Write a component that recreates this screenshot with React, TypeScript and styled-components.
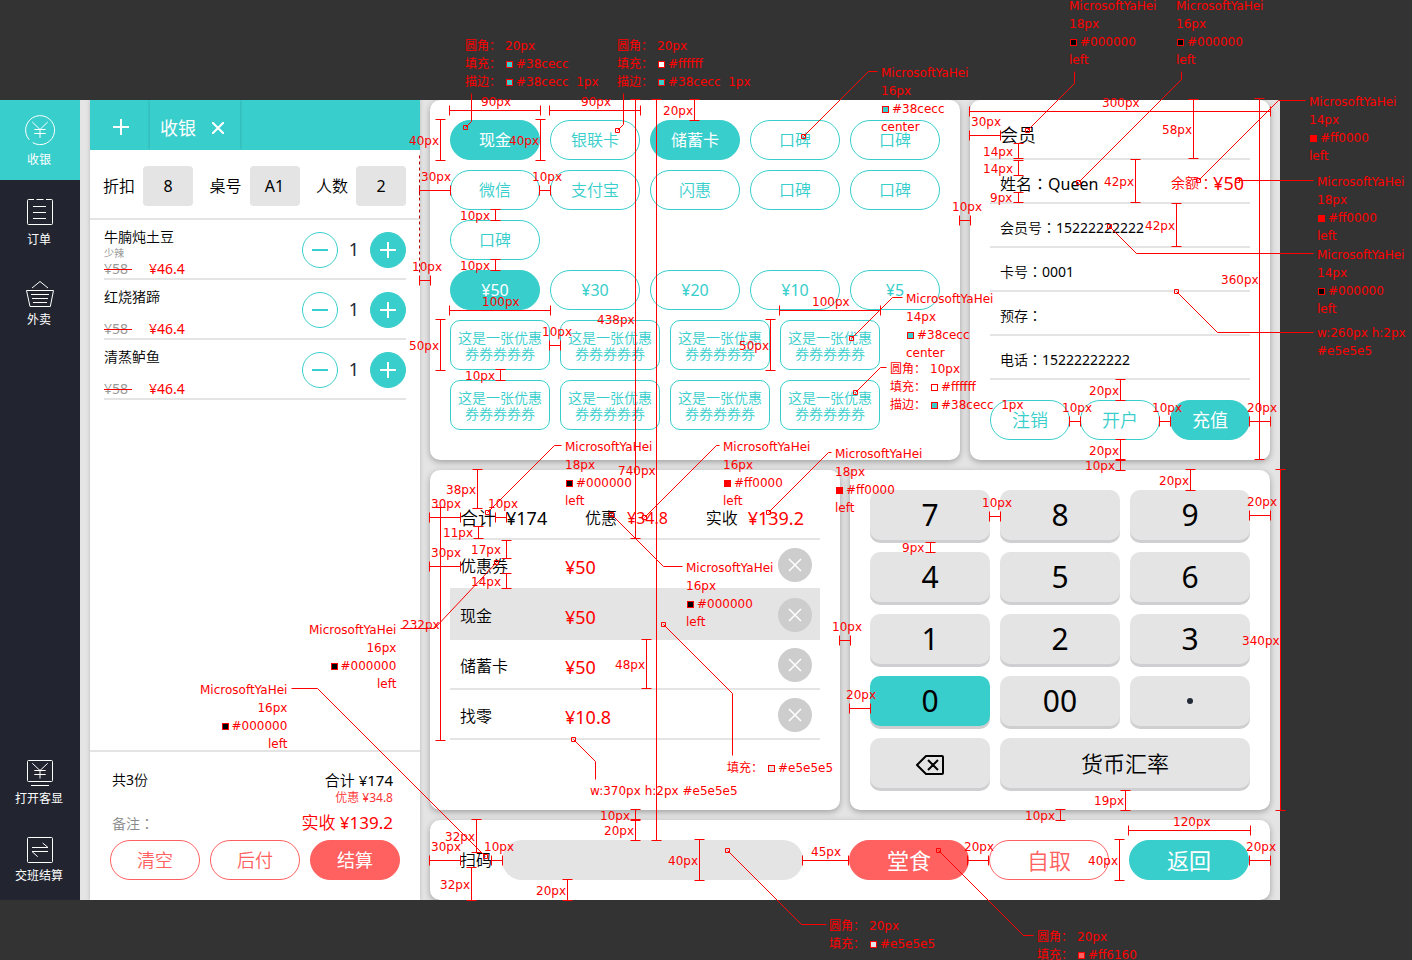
import React from "react";
import styled, { createGlobalStyle, css } from "styled-components";

const TEAL = "#38cecc";
const CORAL = "#ff6160";
const GREY = "#e4e4e4";
const RED = "#ff0000";

const GlobalStyle = createGlobalStyle`
  * { box-sizing: border-box; }
  body {
    margin: 0;
    background: #333333;
    color: #000;
    font-family: "Noto Sans", "Noto Sans CJK SC", sans-serif;
    font-size: 16px;
    font-weight: 350;
    line-height: 20px;
  }
  button, input { font: inherit; color: inherit; margin: 0; padding: 0; border: 0; }
  button { cursor: pointer; background: none; }
  ul, dl, dd { margin: 0; padding: 0; list-style: none; }
`;

/* ---------- page frame ---------- */

const Stage = styled.div`
  position: relative;
  min-height: 100vh;
  padding: 100px 132px 60px 0;
  overflow: hidden;
`;

const Terminal = styled.div`
  display: grid;
  grid-template-columns: 80px minmax(0, 330fr) minmax(0, 840fr);
  column-gap: 10px;
  padding-right: 10px;
  background: ${GREY};
  overflow: hidden;
`;

const Workspace = styled.main`
  display: flex;
  flex-direction: column;
  gap: 10px;
`;

const Columns = styled.div<{ $split: string }>`
  display: grid;
  grid-template-columns: ${(p) => p.$split};
  gap: 10px;
`;

const Card = styled.section`
  background: #fff;
  border-radius: 10px;
  box-shadow: 0 2px 6px rgba(0, 0, 0, 0.3);
  padding: 20px;
`;

const Figure = styled.span`
  font-weight: 400;
`;

/* ---------- navigation ---------- */

const Sidebar = styled.nav`
  display: flex;
  flex-direction: column;
  justify-content: space-between;
  background: #22252f;
  color: #fff;
  font-size: 12px;
  font-weight: 400;
  line-height: 16px;
`;

const NavGroup = styled.div<{ $bottom?: boolean }>`
  display: flex;
  flex-direction: column;
  gap: ${(p) => (p.$bottom ? 28 : 0)}px;
  padding-bottom: ${(p) => (p.$bottom ? 16 : 0)}px;
`;

const NavItem = styled.button<{ $active?: boolean; $compact?: boolean }>`
  display: flex;
  flex-direction: column;
  align-items: center;
  gap: ${(p) => (p.$compact ? 3 : 7)}px;
  padding: ${(p) => (p.$compact ? "0 2px 0 0" : "15px 2px 12px 0")};
  background: ${(p) => (p.$active ? TEAL : "transparent")};
`;

const LineIcon = styled.svg`
  width: 30px;
  height: 30px;
  margin-left: 2px;
  overflow: visible;
  fill: none;
  stroke: currentColor;
  stroke-width: 1;
  flex: none;
`;

/* ---------- order panel ---------- */

const OrderPanel = styled.section`
  display: flex;
  flex-direction: column;
  background: #fff;
  box-shadow: 0 0 4px rgba(0, 0, 0, 0.2);
`;

const TabBar = styled.div`
  display: flex;
  height: 50px;
  background: ${TEAL};
  color: #fff;
  font-weight: 400;
`;

const AddTab = styled.button`
  width: 60px;
  display: flex;
  align-items: center;
  justify-content: center;
  padding: 4px 0 0 2px;
`;

const Tab = styled.div`
  display: flex;
  align-items: center;
  gap: 16px;
  width: 90px;
  padding: 6px 10px 0;
  font-size: 18px;
  line-height: 24px;
  box-shadow: 0 0 3px rgba(0, 0, 0, 0.2);
  clip-path: inset(0 -4px 0 -4px);
`;

const BareButton = styled.button`
  display: flex;
  align-items: center;
  justify-content: center;
`;

const Glyph = styled.svg<{ $size: number; $weight?: number }>`
  width: ${(p) => p.$size}px;
  height: ${(p) => p.$size}px;
  fill: none;
  stroke: currentColor;
  stroke-width: ${(p) => p.$weight ?? 2};
`;

const TableInfo = styled.div`
  display: flex;
  justify-content: space-between;
  padding: 16px 14px 12px 13px;
  border-bottom: 2px solid ${GREY};
`;

const Field = styled.label`
  display: flex;
  align-items: center;
  gap: 8px;
`;

const FieldInput = styled.input`
  width: 50px;
  height: 40px;
  border-radius: 4px;
  background: ${GREY};
  font-weight: 400;
  text-align: center;
`;

const DishList = styled.ul`
  flex: 1;
  padding: 0 14px;
`;

const Dish = styled.li`
  display: flex;
  justify-content: space-between;
  height: 60px;
  border-bottom: 2px solid ${GREY};
`;

const DishText = styled.div`
  display: grid;
  grid-template-rows: 18px 14px 18px;
  padding-top: 8px;
  font-size: 14px;
  line-height: 18px;
`;

const DishNote = styled.span`
  color: #888;
  font-size: 10px;
  line-height: 14px;
`;

const Prices = styled.div`
  display: flex;
  gap: 17px;
  color: ${RED};
  font-weight: 400;
`;

const OldPrice = styled.del`
  position: relative;
  width: 28px;
  color: #999;
  text-decoration: none;
  &::after {
    content: "";
    position: absolute;
    left: 0;
    right: 0;
    top: 9px;
    height: 1px;
    background: ${RED};
  }
`;

const Stepper = styled.div`
  display: flex;
  align-items: center;
  gap: 10px;
  padding-top: 2px;
  color: #232a38;
  font-size: 18px;
  font-weight: 400;
`;

const StepButton = styled.button<{ $filled?: boolean }>`
  display: flex;
  align-items: center;
  justify-content: center;
  width: 36px;
  height: 36px;
  border-radius: 50%;
  border: 1px solid ${TEAL};
  color: ${(p) => (p.$filled ? "#fff" : TEAL)};
  background: ${(p) => (p.$filled ? TEAL : "#fff")};
`;

const StepCount = styled.output`
  width: 12px;
  padding-bottom: 2px;
  text-align: center;
`;

const OrderFooter = styled.footer`
  border-top: 2px solid ${GREY};
  padding: 18px 20px 20px;
`;

const Totals = styled.div`
  display: grid;
  grid-template-columns: auto auto;
  grid-template-rows: 20px 16px 34px;
  justify-content: space-between;
  align-items: center;
  padding: 0 7px 0 2px;
  font-size: 14px;
`;

const TotalValue = styled.span<{ $size: number; $color?: string }>`
  grid-column: 2;
  justify-self: end;
  font-size: ${(p) => p.$size}px;
  color: ${(p) => p.$color ?? "#000"};
`;

const Remark = styled.span`
  grid-row: 3;
  color: #888;
`;

/* A full-width colon centred in its cell. */
const Colon = styled.span`
  font-family: "Noto Sans CJK TC", sans-serif;
`;

/* ---------- pill buttons ---------- */

const PillRow = styled.div<{ $gap?: number }>`
  display: flex;
  gap: ${(p) => p.$gap ?? 10}px;
`;

const Pill = styled.button<{ $tone?: string; $filled?: boolean; $size?: number; $grow?: boolean; $width?: number }>`
  ${(p) => (p.$grow ? css`flex: 1;` : css`width: ${p.$width ? p.$width + "px" : "auto"}; flex: none;`)}
  height: 40px;
  border-radius: 20px;
  border: 1px solid ${(p) => p.$tone ?? TEAL};
  background: ${(p) => (p.$filled ? p.$tone ?? TEAL : "#fff")};
  color: ${(p) => (p.$filled ? "#fff" : p.$tone ?? TEAL)};
  font-size: ${(p) => p.$size ?? 16}px;
  font-weight: ${(p) => (p.$filled ? 400 : 350)};
  line-height: 24px;
`;

/* ---------- payment methods ---------- */

const PaymentCard = styled(Card)`
  padding-bottom: 30px;
`;

const MethodGrid = styled.div`
  display: grid;
  grid-template-columns: repeat(5, 1fr);
  gap: 10px;
`;

const MethodPill = styled(Pill)`
  width: 100%;
`;

const AmountGrid = styled(MethodGrid)`
  margin: 10px 0;
`;

const CouponGrid = styled.div`
  display: grid;
  grid-template-columns: repeat(4, 100px);
  gap: 10px;
`;

const Coupon = styled.button`
  height: 50px;
  padding: 2px 6px 0;
  border: 1px solid ${TEAL};
  border-radius: 10px;
  background: #fff;
  color: ${TEAL};
  font-size: 14px;
  line-height: 16px;
`;

/* ---------- member ---------- */

const MemberCard = styled(Card)`
  padding-top: 0;
`;

const MemberTitle = styled.h2`
  margin: 0;
  padding: 23px 10px 11px;
  border-bottom: 2px solid ${GREY};
  font-size: 18px;
  font-weight: inherit;
  line-height: 24px;
`;

const MemberRow = styled.div<{ $large?: boolean }>`
  display: flex;
  justify-content: space-between;
  height: 44px;
  padding: 13px 6px 9px 10px;
  border-bottom: 2px solid ${GREY};
  font-size: ${(p) => (p.$large ? 16 : 14)}px;
`;

const Balance = styled.span`
  display: flex;
  align-items: center;
  color: ${RED};
  font-size: 14px;
`;

const BalanceValue = styled(Figure)`
  font-size: 18px;
`;

const MemberActions = styled(PillRow)`
  margin-top: 20px;
`;

/* ---------- settlement ---------- */

const Summary = styled.dl`
  display: flex;
  justify-content: space-between;
  padding: 16px 16px 8px 10px;
  border-bottom: 2px solid ${GREY};
  line-height: 24px;
`;

const SummaryPair = styled.div<{ $labelSize?: number; $valueSize?: number; $red?: boolean }>`
  display: flex;
  gap: 10px;
  & > dt { font-size: ${(p) => p.$labelSize ?? 16}px; }
  & > dd {
    font-size: ${(p) => p.$valueSize ?? 18}px;
    font-weight: 400;
    color: ${(p) => (p.$red ? RED : "#000")};
  }
`;

const PaymentTable = styled.table`
  width: 100%;
  table-layout: fixed;
  border-spacing: 0;
`;

const PaymentRow = styled.tr<{ $selected?: boolean }>`
  background: ${(p) => (p.$selected ? GREY : "transparent")};
`;

const Cell = styled.td<{ $kind: "name" | "amount" | "action" }>`
  height: 50px;
  padding: ${(p) => (p.$kind === "name" ? "4px 0 0 10px" : p.$kind === "action" ? "2px 8px 0 0" : "6px 0 0")};
  border-bottom: 2px solid ${GREY};
  ${(p) => p.$kind === "name" && css`width: 115px;`}
  ${(p) => p.$kind === "amount" && css`font-size: 18px; font-weight: 400; color: ${RED};`}
  ${(p) => p.$kind === "action" && css`width: 60px;`}
`;

const RemoveButton = styled(BareButton)`
  width: 34px;
  height: 34px;
  margin-left: auto;
  border-radius: 50%;
  background: #cdcdcd;
  color: #fff;
`;

/* ---------- keypad ---------- */

const KeypadCard = styled(Card)`
  display: grid;
  grid-template-columns: repeat(3, 1fr);
  grid-auto-rows: 50px;
  align-content: start;
  gap: 12px 10px;
  padding-bottom: 22px;
`;

const Key = styled.button<{ $active?: boolean; $wide?: boolean }>`
  display: flex;
  align-items: center;
  justify-content: center;
  grid-column: span ${(p) => (p.$wide ? 2 : 1)};
  border-radius: 10px;
  background: ${(p) => (p.$active ? TEAL : GREY)};
  box-shadow: 0 3px 0 #cfcfd1;
  font-size: ${(p) => (p.$wide ? 22 : 30)}px;
  font-weight: ${(p) => (p.$wide ? 350 : 400)};
  line-height: 40px;
`;

const Point = styled.span`
  width: 6px;
  height: 6px;
  border-radius: 50%;
  background: #232a38;
`;

const BackspaceIcon = styled.svg`
  width: 30px;
  height: 22px;
  margin-top: 4px;
  fill: none;
  stroke: #000;
  stroke-width: 2;
  stroke-linejoin: round;
`;

/* ---------- scan bar ---------- */

const ScanBar = styled(Card)`
  display: flex;
  align-items: center;
  gap: 46px;
  padding: 20px 21px 20px 30px;
`;

const ScanField = styled(Field)`
  flex: 1;
  gap: 10px;
`;

const ScanInput = styled.input`
  flex: 1;
  min-width: 0;
  height: 40px;
  padding: 0 20px;
  border-radius: 20px;
  background: ${GREY};
`;

/* ---------- redline annotations over the mock-up ---------- */

const Redlines = styled.div`
  position: absolute;
  inset: 0;
  overflow: hidden;
  pointer-events: none;
  color: ${RED};
  font-family: "DejaVu Sans", "Noto Sans CJK SC", sans-serif;
  font-size: 12px;
  font-weight: 400;
  line-height: 16px;
`;

const RuleLines = styled.svg`
  position: absolute;
  left: 0;
  top: 0;
  width: 1412px;
  height: 960px;
  fill: none;
  stroke: ${RED};
  stroke-width: 1;
`;

const Pin = styled.span<{ $x: number; $y: number }>`
  position: absolute;
  left: ${(p) => p.$x}px;
  top: ${(p) => p.$y}px;
  white-space: pre;
`;

const Note = styled(Pin)<{ $right?: boolean }>`
  display: flex;
  flex-direction: column;
  align-items: ${(p) => (p.$right ? "flex-end" : "flex-start")};
  line-height: 18px;
`;

const NoteLine = styled.span`
  display: flex;
  align-items: center;
`;

const NoteKey = styled.span`
  width: 40px;
`;

const Swatch = styled.i<{ $color: string }>`
  width: 7px;
  height: 7px;
  margin: 0 3px 0 1px;
  border: 1px solid ${RED};
  background: ${(p) => p.$color};
`;

type Rule = [dir: "h" | "v", at: number, from: number, to: number, text: string, x: number, y: number];

const rules: Rule[] = [
  ["h", 110, 449, 540, "90px", 481, 102],
  ["h", 110, 549, 640, "90px", 581, 102],
  ["v", 440, 119, 160, "40px", 409, 141],
  ["v", 540, 119, 160, "40px", 509, 141],
  ["v", 635, 99, 538, "438px", 597, 320],
  ["v", 656, 99, 840, "740px", 618, 471],
  ["v", 694, 99, 120, "20px", 663, 111],
  ["h", 190, 419, 450, "30px", 421, 177],
  ["h", 190, 539, 550, "10px", 532, 177],
  ["v", 495, 209, 220, "10px", 460, 216],
  ["v", 495, 259, 270, "10px", 460, 266],
  ["h", 280, 419, 430, "10px", 412, 267],
  ["h", 310, 449, 550, "100px", 482, 302],
  ["v", 440, 319, 370, "50px", 409, 346],
  ["h", 345, 549, 560, "10px", 542, 332],
  ["v", 500, 369, 380, "10px", 465, 376],
  ["h", 310, 779, 880, "100px", 812, 302],
  ["v", 770, 319, 370, "50px", 739, 346],
  ["h", 220, 959, 970, "10px", 952, 207],
  ["h", 111, 969, 1270, "300px", 1102, 103],
  ["h", 135, 969, 1000, "30px", 971, 122],
  ["v", 1018, 143, 158, "14px", 983, 152],
  ["v", 1018, 160, 175, "14px", 983, 169],
  ["v", 1018, 192, 202, "9px", 990, 198],
  ["v", 1193, 99, 158, "58px", 1162, 130],
  ["v", 1135, 159, 202, "42px", 1104, 182],
  ["v", 1176, 203, 246, "42px", 1145, 226],
  ["v", 1259, 98, 459, "360px", 1221, 280],
  ["v", 1120, 379, 400, "20px", 1089, 391],
  ["h", 421, 1069, 1080, "10px", 1062, 408],
  ["h", 421, 1159, 1170, "10px", 1152, 408],
  ["h", 421, 1249, 1270, "20px", 1247, 408],
  ["v", 1120, 439, 459, "20px", 1089, 451],
  ["v", 1120, 460, 470, "10px", 1085, 466],
  ["v", 1190, 469, 490, "20px", 1159, 481],
  ["h", 515, 1249, 1270, "20px", 1247, 502],
  ["v", 1280, 469, 810, "340px", 1242, 641],
  ["h", 516, 989, 1000, "10px", 982, 503],
  ["v", 477, 469, 508, "38px", 446, 490],
  ["h", 517, 429, 460, "30px", 431, 504],
  ["h", 517, 495, 506, "10px", 488, 504],
  ["v", 440, 507, 740, "232px", 402, 625],
  ["v", 478, 526, 538, "11px", 443, 533],
  ["v", 506, 540, 558, "17px", 471, 550],
  ["v", 506, 573, 588, "14px", 471, 582],
  ["h", 566, 429, 460, "30px", 431, 553],
  ["v", 646, 639, 688, "48px", 615, 665],
  ["v", 930, 542, 552, "9px", 902, 548],
  ["h", 640, 839, 850, "10px", 832, 627],
  ["h", 708, 849, 870, "20px", 846, 695],
  ["v", 635, 809, 819, "10px", 600, 816],
  ["v", 635, 820, 840, "20px", 604, 831],
  ["v", 476, 819, 852, "32px", 445, 837],
  ["h", 860, 429, 460, "30px", 431, 847],
  ["h", 860, 491, 502, "10px", 484, 847],
  ["v", 471, 867, 900, "32px", 440, 885],
  ["v", 567, 879, 900, "20px", 536, 891],
  ["v", 699, 839, 880, "40px", 668, 861],
  ["h", 860, 802, 848, "45px", 811, 852],
  ["v", 1125, 790, 810, "19px", 1094, 801],
  ["v", 1060, 809, 820, "10px", 1025, 816],
  ["h", 830, 1128, 1250, "120px", 1173, 822],
  ["h", 860, 967, 988, "20px", 964, 847],
  ["v", 1119, 839, 880, "40px", 1088, 861],
  ["h", 860, 1249, 1270, "20px", 1246, 847],
];

const rulePath = ([dir, at, from, to]: Rule) =>
  dir === "h"
    ? `M${from} ${at}H${to}M${from} ${at - 5}v10M${to} ${at - 5}v10`
    : `M${at} ${from}V${to}M${at - 5} ${from}h10M${at - 5} ${to}h10`;

/* Each leader starts at its marker and ends beside its note. */
const leaders: number[][] = [
  [465, 127, 471, 121, 471, 93],
  [617, 130, 623, 124, 623, 93],
  [803, 136, 868, 71, 877, 71],
  [1027, 130, 1074, 83, 1074, 71],
  [1078, 182, 1181, 79, 1181, 71],
  [1198, 180, 1278, 100, 1305, 100],
  [1237, 180, 1313, 180],
  [1109, 226, 1136, 253, 1313, 253],
  [1176, 291, 1217, 332, 1313, 332],
  [851, 338, 892, 297, 902, 297],
  [855, 392, 880, 367, 886, 367],
  [487, 512, 554, 445, 561, 445],
  [644, 517, 716, 445, 719, 445],
  [768, 512, 828, 452, 831, 452],
  [611, 514, 663, 566, 682, 566],
  [496, 562, 434, 628, 400, 628],
  [485, 856, 317, 688, 291, 688],
  [663, 624, 732, 693, 732, 755],
  [573, 739, 595, 761, 595, 779],
  [727, 850, 801, 924, 826, 924],
  [938, 850, 1023, 935, 1033, 935],
];

const leaderPath = (pts: number[]) => {
  const pairs: string[] = [];
  for (let i = 0; i < pts.length; i += 2) pairs.push(`${pts[i]} ${pts[i + 1]}`);
  return `M${pairs.join("L")}M${pts[0] - 2} ${pts[1] - 2}h4v4h-4z`;
};

type NoteData = { x: number; y: number; right?: boolean; lines: [key: string, color: string, text: string][] };

const typeNote = (x: number, y: number, size: number, color: string, align = "left"): NoteData => ({
  x,
  y,
  lines: [
    ["", "", "MicrosoftYaHei"],
    ["", "", size + "px"],
    ["", color, color],
    ["", "", align],
  ],
});

const notes: NoteData[] = [
  { x: 465, y: 37, lines: [["圆角：", "", "20px"], ["填充：", "#38cecc", "#38cecc"], ["描边：", "#38cecc", "#38cecc  1px"]] },
  { x: 617, y: 37, lines: [["圆角：", "", "20px"], ["填充：", "#ffffff", "#ffffff"], ["描边：", "#38cecc", "#38cecc  1px"]] },
  typeNote(881, 64, 16, "#38cecc", "center"),
  typeNote(1069, -3, 18, "#000000"),
  typeNote(1176, -3, 16, "#000000"),
  typeNote(1309, 93, 14, "#ff0000"),
  typeNote(1317, 173, 18, "#ff0000"),
  typeNote(1317, 246, 14, "#000000"),
  typeNote(906, 290, 14, "#38cecc", "center"),
  { x: 890, y: 360, lines: [["圆角：", "", "10px"], ["填充：", "#ffffff", "#ffffff"], ["描边：", "#38cecc", "#38cecc  1px"]] },
  typeNote(565, 438, 18, "#000000"),
  typeNote(723, 438, 16, "#ff0000"),
  typeNote(835, 445, 18, "#ff0000"),
  typeNote(686, 559, 16, "#000000"),
  { ...typeNote(309, 621, 16, "#000000"), right: true },
  { ...typeNote(200, 681, 16, "#000000"), right: true },
  { x: 727, y: 759, lines: [["填充：", "#e5e5e5", "#e5e5e5"]] },
  { x: 590, y: 782, lines: [["", "", "w:370px h:2px #e5e5e5"]] },
  { x: 1317, y: 324, lines: [["", "", "w:260px h:2px"], ["", "", "#e5e5e5"]] },
  { x: 829, y: 917, lines: [["圆角：", "", "20px"], ["填充：", "#e5e5e5", "#e5e5e5"]] },
  { x: 1037, y: 928, lines: [["圆角：", "", "20px"], ["填充：", "#ff6160", "#ff6160"]] },
];

function Annotations() {
  return (
    <Redlines>
      <RuleLines viewBox="-0.5 -0.5 1412 960">
        {rules.map((r, i) => <path key={i} d={rulePath(r)} />)}
        {leaders.map((l, i) => <path key={i} d={leaderPath(l)} />)}
        <path d="M419 155V272" stroke="#b40000" strokeDasharray="3 3" />
      </RuleLines>
      {rules.map((r, i) => <Pin key={i} $x={r[5]} $y={r[6] - 8}>{r[4]}</Pin>)}
      {notes.map((n, i) => (
        <Note key={i} $x={n.x} $y={n.y} $right={n.right}>
          {n.lines.map(([key, color, text], j) => (
            <NoteLine key={j}>
              {key && <NoteKey>{key}</NoteKey>}
              {color && <Swatch $color={color} />}
              {text}
            </NoteLine>
          ))}
        </Note>
      ))}
    </Redlines>
  );
}

/* ---------- icons ---------- */

const CashierIcon = () => (
  <LineIcon viewBox="0 0 30 30">
    <path d="M7.7 27.6A14.5 14.5 0 1 0 4.3 24.8M7.3 7L15 14.5L22.7 7M9.3 14.5H20.7M9.3 18.5H20.7M15 14.5V23" />
  </LineIcon>
);
const OrdersIcon = () => (
  <LineIcon viewBox="0 0 30 30">
    <path d="M9 4.5H3.5Q2.5 4.5 2.5 5.5V28.5Q2.5 29.5 3.5 29.5H26.5Q27.5 29.5 27.5 28.5V5.5Q27.5 4.5 26.5 4.5H21M11.5 4.5H18.5M8 11.5H21M8 17.5H21M8 23.5H21" />
  </LineIcon>
);
const TakeoutIcon = () => (
  <LineIcon viewBox="0 0 30 30">
    <path d="M7 13L15 6.5L23 13M1.5 15.5H28.5L25.3 31.5H5ZM6 19.5H24M7 23.5H23M8 27.5H22" />
  </LineIcon>
);
const DisplayIcon = () => (
  <LineIcon viewBox="0 0 30 30">
    <rect x="2.5" y="2.5" width="25" height="21" rx="1" />
    <path d="M6 27.5H24M7.3 5.3L15 12.5L22.7 5.3M9.3 12.5H20.7M9.3 16.5H20.7M15 12.5V20.5" />
  </LineIcon>
);
const ShiftIcon = () => (
  <LineIcon viewBox="0 0 30 30">
    <rect x="2.5" y="2.5" width="25" height="25" rx="1" />
    <path d="M7 12.5H23L17.7 8M23 16.5H7L12.7 21.7" />
  </LineIcon>
);

/* ---------- data ---------- */

const dishes = [
  { name: "牛腩炖土豆", note: "少辣" },
  { name: "红烧猪蹄", note: "" },
  { name: "清蒸鲈鱼", note: "" },
];
const methods = ["现金", "银联卡", "储蓄卡", "口碑", "口碑", "微信", "支付宝", "闪惠", "口碑", "口碑", "口碑"];
const amounts = ["¥50", "¥30", "¥20", "¥10", "¥5"];
const memberRows = [["会员号", "15222222222"], ["卡号", "0001"], ["预存", ""], ["电话", "15222222222"]];
const payments = [["优惠券", "¥50"], ["现金", "¥50"], ["储蓄卡", "¥50"], ["找零", "¥10.8"]];

export default function App() {
  return (
    <Stage>
      <GlobalStyle />
      <Terminal>
        <Sidebar>
          <NavGroup>
            <NavItem $active><CashierIcon />收银</NavItem>
            <NavItem><OrdersIcon />订单</NavItem>
            <NavItem><TakeoutIcon />外卖</NavItem>
          </NavGroup>
          <NavGroup $bottom>
            <NavItem $compact><DisplayIcon />打开客显</NavItem>
            <NavItem $compact><ShiftIcon />交班结算</NavItem>
          </NavGroup>
        </Sidebar>

        <OrderPanel>
          <TabBar>
            <AddTab aria-label="新建">
              <Glyph $size={16} viewBox="0 0 16 16"><path d="M8 0V16M0 8H16" /></Glyph>
            </AddTab>
            <Tab>
              收银
              <BareButton aria-label="关闭">
                <Glyph $size={12} viewBox="0 0 12 12"><path d="M0 0L12 12M12 0L0 12" /></Glyph>
              </BareButton>
            </Tab>
          </TabBar>
          <TableInfo>
            <Field>折扣<FieldInput defaultValue="8" /></Field>
            <Field>桌号<FieldInput defaultValue="A1" /></Field>
            <Field>人数<FieldInput defaultValue="2" /></Field>
          </TableInfo>
          <DishList>
            {dishes.map((d) => (
              <Dish key={d.name}>
                <DishText>
                  <span>{d.name}</span>
                  <DishNote>{d.note}</DishNote>
                  <Prices><OldPrice>¥58</OldPrice>¥46.4</Prices>
                </DishText>
                <Stepper>
                  <StepButton aria-label="减少">
                    <Glyph $size={16} viewBox="0 0 16 16"><path d="M0 8H16" /></Glyph>
                  </StepButton>
                  <StepCount>1</StepCount>
                  <StepButton $filled aria-label="增加">
                    <Glyph $size={16} viewBox="0 0 16 16"><path d="M8 0V16M0 8H16" /></Glyph>
                  </StepButton>
                </Stepper>
              </Dish>
            ))}
          </DishList>
          <OrderFooter>
            <Totals>
              <span>共<Figure>3</Figure>份</span>
              <TotalValue $size={15}>合计 <Figure>¥174</Figure></TotalValue>
              <TotalValue $size={12} $color="#ff3333">优惠 <Figure>¥34.8</Figure></TotalValue>
              <Remark>备注<Colon>：</Colon></Remark>
              <TotalValue $size={17} $color={RED}>实收 <Figure>¥139.2</Figure></TotalValue>
            </Totals>
            <PillRow>
              <Pill $grow $tone={CORAL} $size={18}>清空</Pill>
              <Pill $grow $tone={CORAL} $size={18}>后付</Pill>
              <Pill $grow $tone={CORAL} $size={18} $filled>结算</Pill>
            </PillRow>
          </OrderFooter>
        </OrderPanel>

        <Workspace>
          <Columns $split="53fr 30fr">
            <PaymentCard>
              <MethodGrid>
                {methods.map((m, i) => <MethodPill key={i} $filled={i === 0 || i === 2}>{m}</MethodPill>)}
              </MethodGrid>
              <AmountGrid>
                {amounts.map((a, i) => <MethodPill key={a} $filled={i === 0}><Figure>{a}</Figure></MethodPill>)}
              </AmountGrid>
              <CouponGrid>
                {Array.from({ length: 8 }, (_, i) => <Coupon key={i}>这是一张优惠券券券券券</Coupon>)}
              </CouponGrid>
            </PaymentCard>
            <MemberCard>
              <MemberTitle>会员</MemberTitle>
              <MemberRow $large>
                <span>姓名<Colon>：</Colon><Figure>Queen</Figure></span>
                <Balance>余额<Colon>：</Colon><BalanceValue>¥50</BalanceValue></Balance>
              </MemberRow>
              {memberRows.map(([label, value]) => (
                <MemberRow key={label}>
                  <span>{label}<Colon>：</Colon><Figure>{value}</Figure></span>
                </MemberRow>
              ))}
              <MemberActions>
                <Pill $grow $size={18}>注销</Pill>
                <Pill $grow $size={18}>开户</Pill>
                <Pill $grow $size={18} $filled>充值</Pill>
              </MemberActions>
            </MemberCard>
          </Columns>

          <Columns $split="41fr 42fr">
            <Card>
              <Summary>
                <SummaryPair $labelSize={18}><dt>合计</dt><dd>¥174</dd></SummaryPair>
                <SummaryPair $valueSize={16} $red><dt>优惠</dt><dd>¥34.8</dd></SummaryPair>
                <SummaryPair $red><dt>实收</dt><dd>¥139.2</dd></SummaryPair>
              </Summary>
              <PaymentTable>
                <tbody>
                  {payments.map(([name, amount], i) => (
                    <PaymentRow key={name} $selected={i === 1}>
                      <Cell $kind="name">{name}</Cell>
                      <Cell $kind="amount">{amount}</Cell>
                      <Cell $kind="action">
                        <RemoveButton aria-label="删除">
                          <Glyph $size={14} $weight={1.5} viewBox="0 0 14 14"><path d="M1 1L13 13M13 1L1 13" /></Glyph>
                        </RemoveButton>
                      </Cell>
                    </PaymentRow>
                  ))}
                </tbody>
              </PaymentTable>
            </Card>
            <KeypadCard>
              {["7", "8", "9", "4", "5", "6", "1", "2", "3"].map((k) => <Key key={k}>{k}</Key>)}
              <Key $active>0</Key>
              <Key>00</Key>
              <Key aria-label="小数点"><Point /></Key>
              <Key aria-label="退格">
                <BackspaceIcon viewBox="0 0 30 22">
                  <path d="M2 11L11 2H27Q28 2 28 3V19Q28 20 27 20H11ZM13 6L23 16M23 6L13 16" />
                </BackspaceIcon>
              </Key>
              <Key $wide>货币汇率</Key>
            </KeypadCard>
          </Columns>

          <ScanBar>
            <ScanField>扫码<ScanInput /></ScanField>
            <PillRow $gap={20}>
              <Pill $width={120} $size={22} $tone={CORAL} $filled>堂食</Pill>
              <Pill $width={120} $size={22} $tone={CORAL}>自取</Pill>
              <Pill $width={120} $size={22} $filled>返回</Pill>
            </PillRow>
          </ScanBar>
        </Workspace>
      </Terminal>
      <Annotations />
    </Stage>
  );
}
